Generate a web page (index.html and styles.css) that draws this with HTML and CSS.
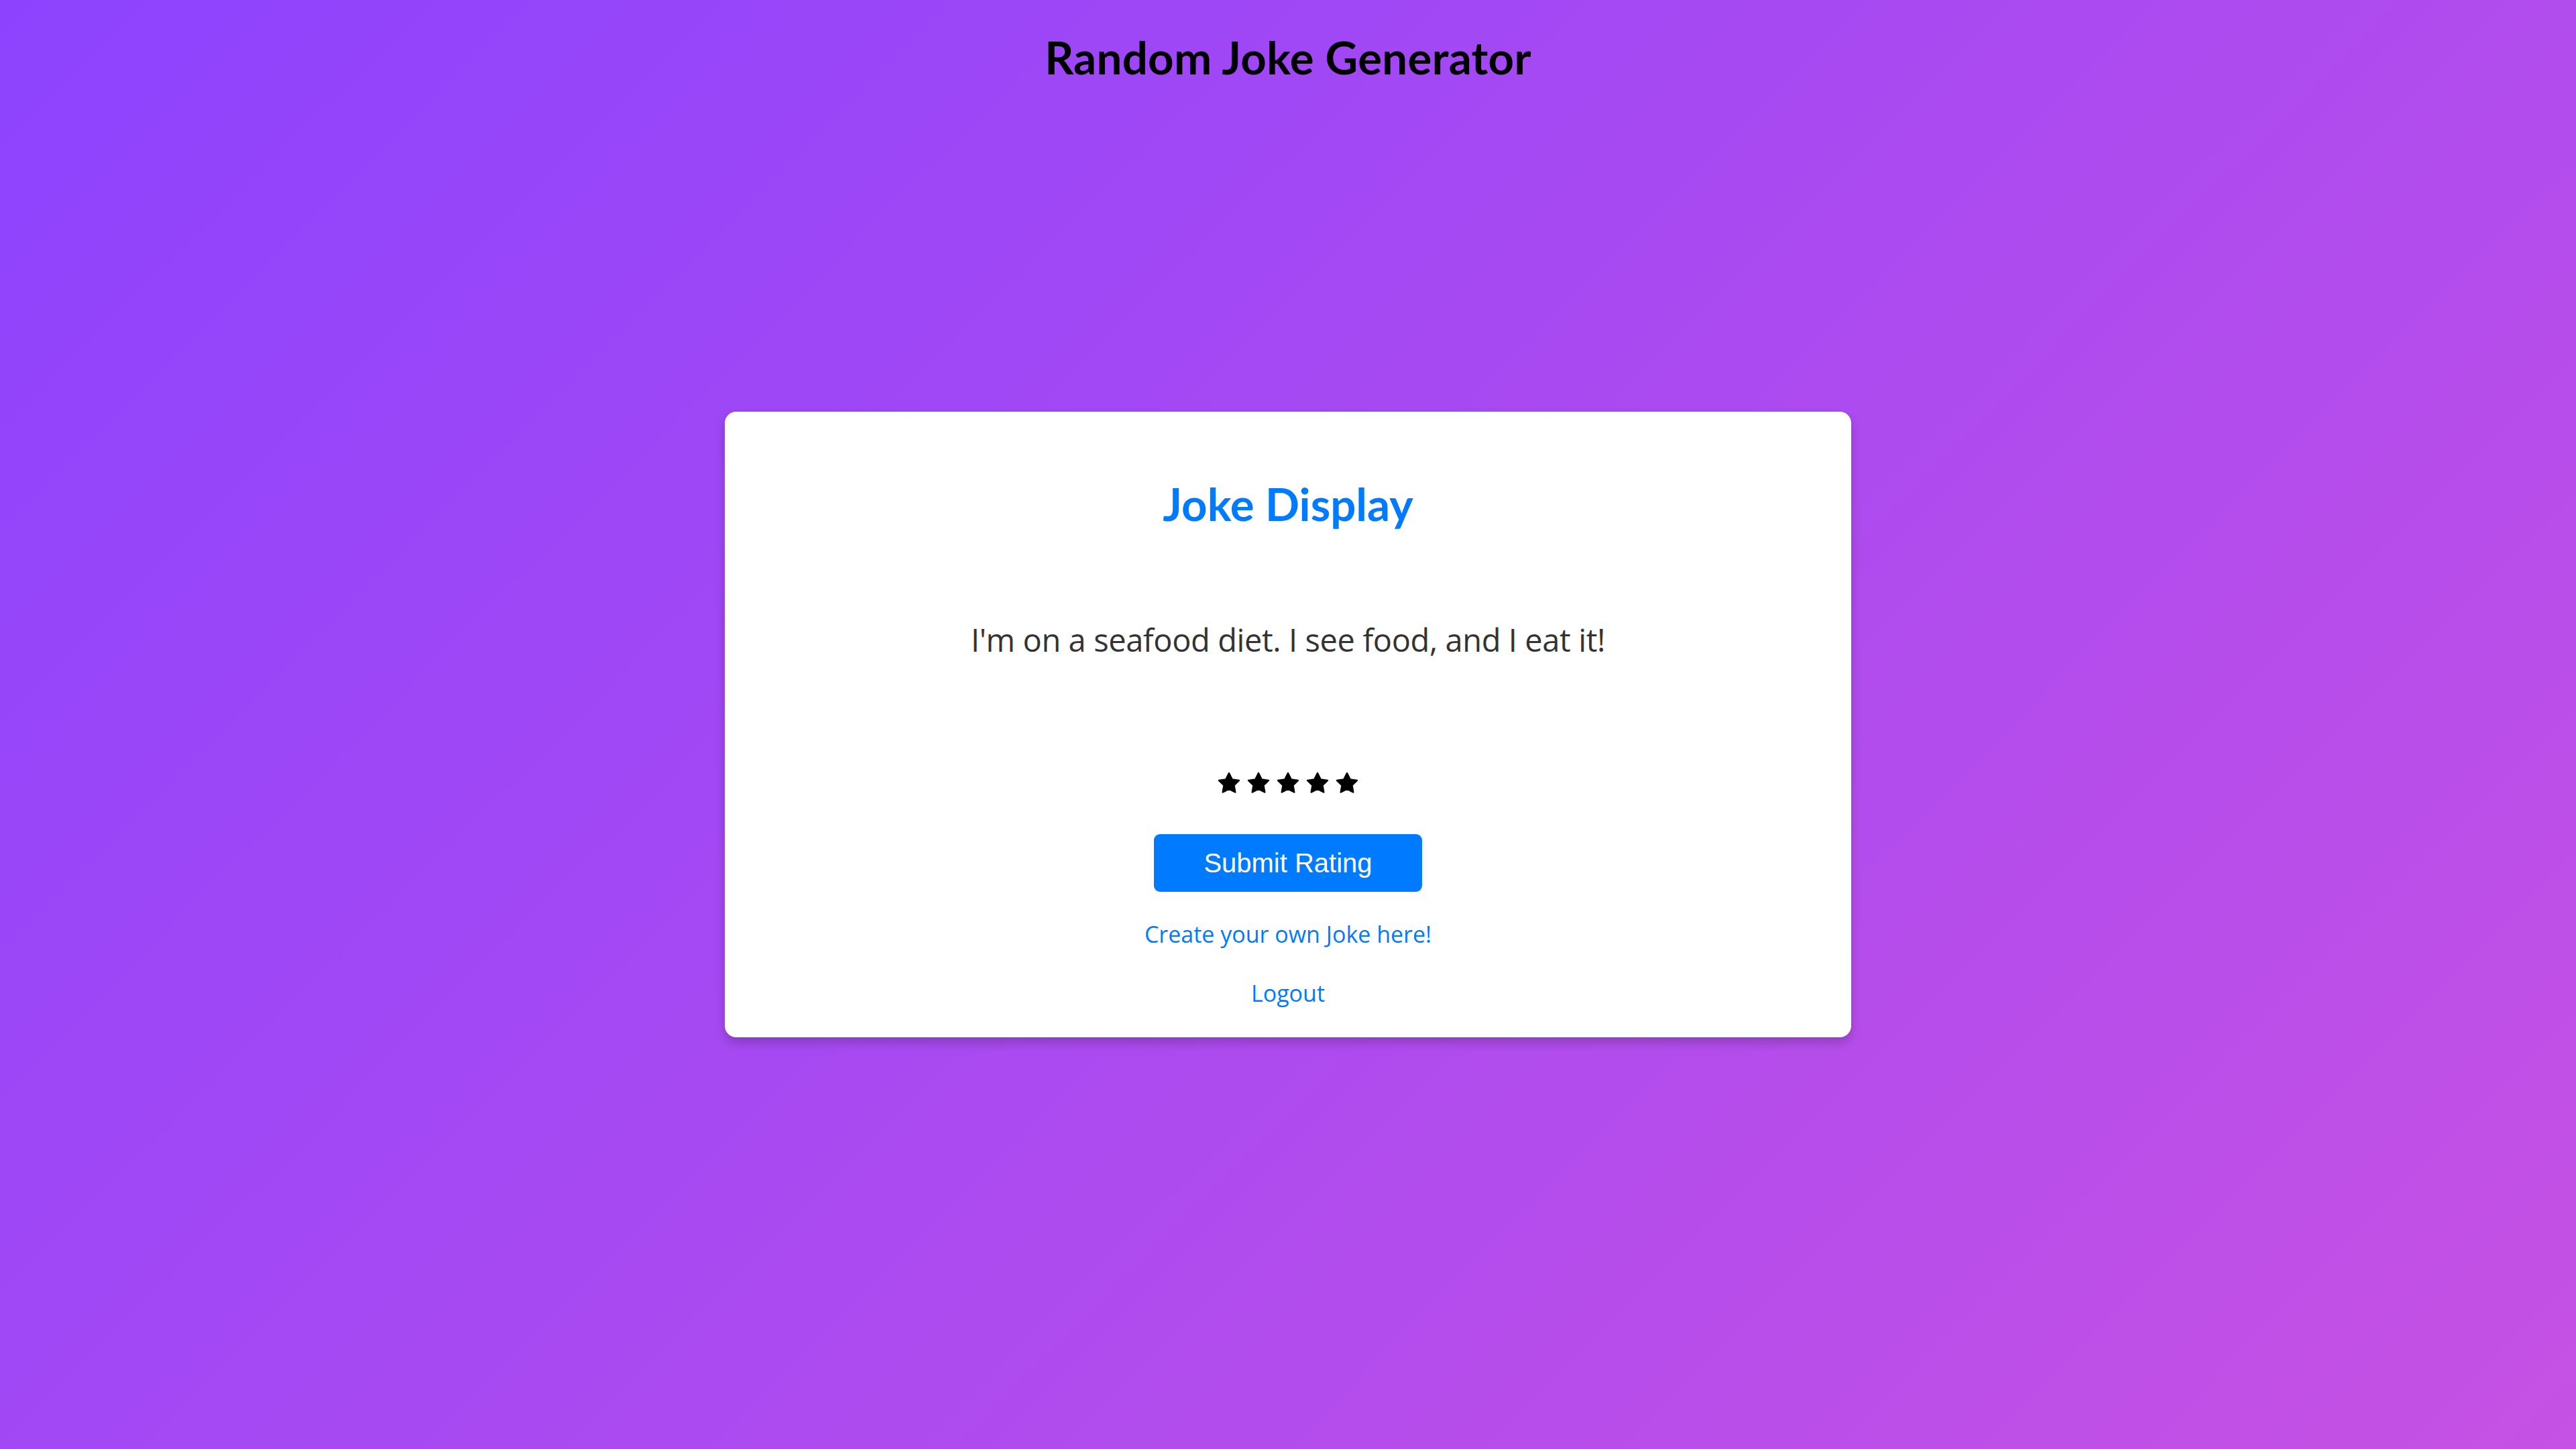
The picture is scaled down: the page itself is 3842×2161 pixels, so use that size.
FILE: index.html
```html
<!DOCTYPE html>
<html lang="en">
<head>
<meta charset="utf-8">
<title>Random Joke Generator</title>
<link rel="stylesheet" href="styles.css">
</head>
<body>
<div class="page">
  <h1 class="site-title">Random Joke Generator</h1>
  <main class="card">
    <h2 class="card-title">Joke Display</h2>
    <p class="joke">I'm on a seafood diet. I see food, and I eat it!</p>
    <div class="stars">
      <svg class="star" viewBox="0 0 24 24"><path d="M12 2l3.09 6.26L22 9.27l-5 4.87 1.18 6.88L12 17.77l-6.18 3.25L7 14.14 2 9.27l6.91-1.01L12 2z"/></svg>
      <svg class="star" viewBox="0 0 24 24"><path d="M12 2l3.09 6.26L22 9.27l-5 4.87 1.18 6.88L12 17.77l-6.18 3.25L7 14.14 2 9.27l6.91-1.01L12 2z"/></svg>
      <svg class="star" viewBox="0 0 24 24"><path d="M12 2l3.09 6.26L22 9.27l-5 4.87 1.18 6.88L12 17.77l-6.18 3.25L7 14.14 2 9.27l6.91-1.01L12 2z"/></svg>
      <svg class="star" viewBox="0 0 24 24"><path d="M12 2l3.09 6.26L22 9.27l-5 4.87 1.18 6.88L12 17.77l-6.18 3.25L7 14.14 2 9.27l6.91-1.01L12 2z"/></svg>
      <svg class="star" viewBox="0 0 24 24"><path d="M12 2l3.09 6.26L22 9.27l-5 4.87 1.18 6.88L12 17.77l-6.18 3.25L7 14.14 2 9.27l6.91-1.01L12 2z"/></svg>
    </div>
    <button class="submit-btn" type="button">Submit Rating</button>
    <a class="card-link first" href="#">Create your own Joke here!</a>
    <a class="card-link" href="#">Logout</a>
  </main>
  <div class="spacer"></div>
</div>
</body>
</html>
```
FILE: styles.css
```css
html, body {
  margin: 0;
  padding: 0;
}

body {
  background: linear-gradient(135deg, #8d43fe 0%, #c651e4 100%);
  min-height: 100vh;
  font-family: "Open Sans", "Noto Sans", sans-serif;
}

.page {
  min-height: 100vh;
  display: grid;
  grid-template-rows: 1fr auto 1fr;
  justify-items: center;
}

.site-title {
  align-self: start;
  margin: 45px 0 0;
  font-family: "Lato", "Open Sans", sans-serif;
  font-weight: 700;
  font-size: 67.2px;
  line-height: 1.2;
  letter-spacing: 0.3px;
  color: #000;
  text-align: center;
}

.card {
  box-sizing: border-box;
  width: 1680px;
  background: #fff;
  border-radius: 17px;
  box-shadow: 0 8px 16px rgba(0, 0, 0, 0.2);
  padding: 42px 42px 41.5px;
  display: flex;
  flex-direction: column;
  align-items: center;
  text-align: center;
}

.card-title {
  margin: 55px 0 0;
  font-family: "Lato", "Open Sans", sans-serif;
  font-weight: 700;
  font-size: 67.2px;
  line-height: 1.2;
  color: #007bff;
}

.joke {
  margin: 130px 0 0;
  font-size: 47px;
  line-height: 1.4;
  letter-spacing: -0.4px;
  color: #333;
}

.stars {
  margin-top: 162.5px;
  display: flex;
  gap: 8px;
  height: 36px;
}

.star {
  width: 36px;
  height: 36px;
  display: block;
}

.star path {
  fill: #000;
  stroke: #000;
  stroke-width: 1.6;
  stroke-linejoin: round;
}

.submit-btn {
  margin-top: 57.5px;
  height: 86px;
  padding: 0 74px;
  border: none;
  border-radius: 9px;
  background: #007bff;
  color: #fff;
  font-family: "Liberation Sans", Arial, sans-serif;
  font-size: 40px;
  line-height: 1;
  cursor: pointer;
}

.card-link {
  display: block;
  margin-top: 41px;
  font-size: 34px;
  line-height: 47px;
  color: #007bff;
  text-decoration: none;
}

.card-link.first {
  margin-top: 40.5px;
}
```
